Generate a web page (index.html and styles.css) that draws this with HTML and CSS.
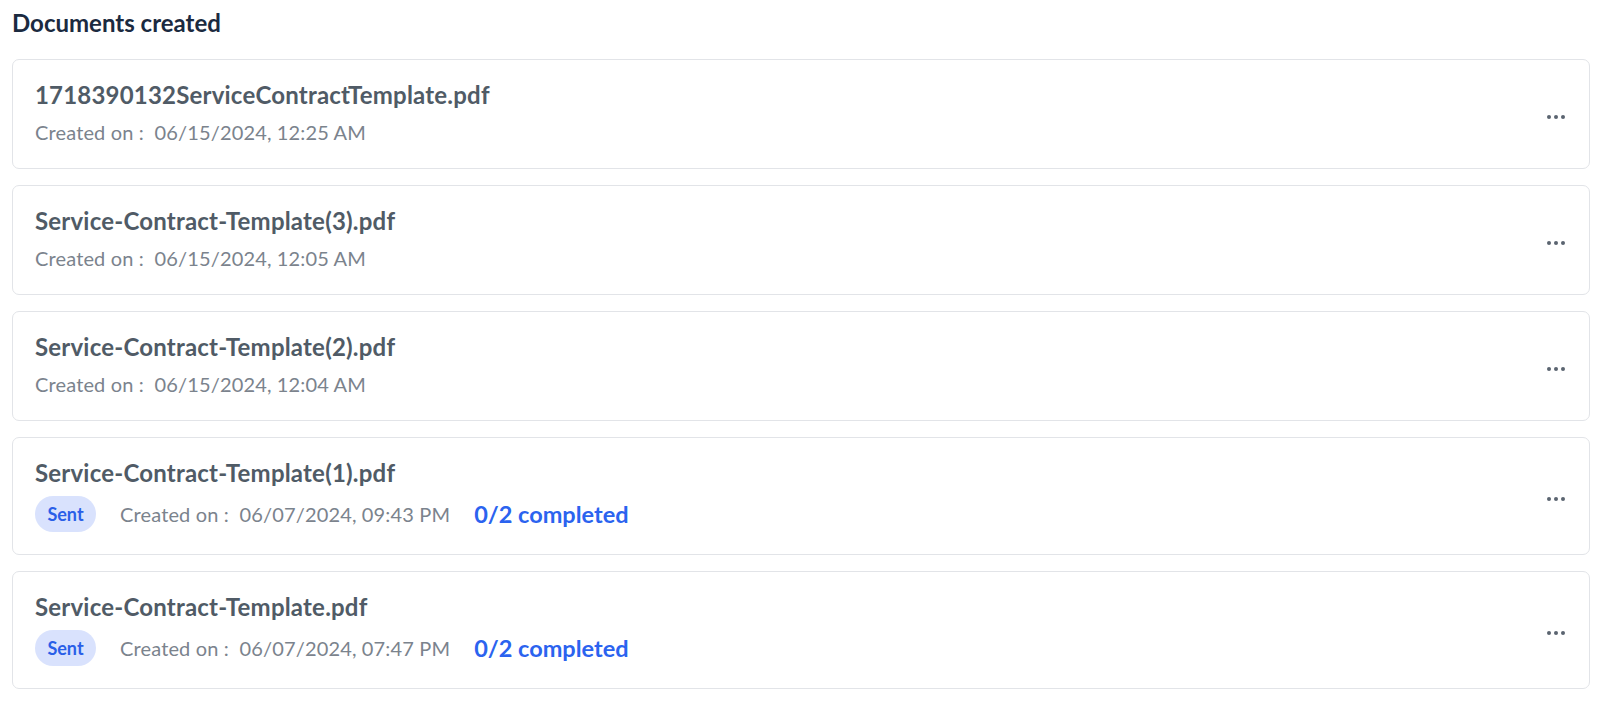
FILE: index.html
```html
<!DOCTYPE html>
<html>
<head>
<meta charset="utf-8">
<link rel="stylesheet" href="styles.css">
</head>
<body>
<div class="page">
  <h2 class="heading">Documents created</h2>
  <div class="list">
    <div class="card">
      <div class="info">
        <div class="title">1718390132ServiceContractTemplate.pdf</div>
        <div class="meta"><span class="created">Created on :&nbsp; 06/15/2024, 12:25 AM</span></div>
      </div>
      <svg class="more" width="20" height="6" viewBox="0 0 20 6"><circle cx="3" cy="3" r="2"/><circle cx="10" cy="3" r="2"/><circle cx="17" cy="3" r="2"/></svg>
    </div>
    <div class="card">
      <div class="info">
        <div class="title">Service-Contract-Template(3).pdf</div>
        <div class="meta"><span class="created">Created on :&nbsp; 06/15/2024, 12:05 AM</span></div>
      </div>
      <svg class="more" width="20" height="6" viewBox="0 0 20 6"><circle cx="3" cy="3" r="2"/><circle cx="10" cy="3" r="2"/><circle cx="17" cy="3" r="2"/></svg>
    </div>
    <div class="card">
      <div class="info">
        <div class="title">Service-Contract-Template(2).pdf</div>
        <div class="meta"><span class="created">Created on :&nbsp; 06/15/2024, 12:04 AM</span></div>
      </div>
      <svg class="more" width="20" height="6" viewBox="0 0 20 6"><circle cx="3" cy="3" r="2"/><circle cx="10" cy="3" r="2"/><circle cx="17" cy="3" r="2"/></svg>
    </div>
    <div class="card">
      <div class="info">
        <div class="title">Service-Contract-Template(1).pdf</div>
        <div class="meta">
          <span class="badge">Sent</span>
          <span class="created">Created on :&nbsp; 06/07/2024, 09:43 PM</span>
          <span class="progress">0/2 completed</span>
        </div>
      </div>
      <svg class="more" width="20" height="6" viewBox="0 0 20 6"><circle cx="3" cy="3" r="2"/><circle cx="10" cy="3" r="2"/><circle cx="17" cy="3" r="2"/></svg>
    </div>
    <div class="card">
      <div class="info">
        <div class="title">Service-Contract-Template.pdf</div>
        <div class="meta">
          <span class="badge">Sent</span>
          <span class="created">Created on :&nbsp; 06/07/2024, 07:47 PM</span>
          <span class="progress">0/2 completed</span>
        </div>
      </div>
      <svg class="more" width="20" height="6" viewBox="0 0 20 6"><circle cx="3" cy="3" r="2"/><circle cx="10" cy="3" r="2"/><circle cx="17" cy="3" r="2"/></svg>
    </div>
  </div>
</div>
</body>
</html>
```

FILE: styles.css
```css
* { box-sizing: border-box; }
html, body { margin: 0; padding: 0; background: #ffffff; }
body { font-family: Lato, "Noto Sans", sans-serif; }
.page { padding: 8px 18px 0 12px; }
.heading {
  margin: 0;
  font-size: 24px;
  line-height: 30px;
  font-weight: 700;
  color: #1b2a40;
}
.list {
  margin-top: 21px;
  display: flex;
  flex-direction: column;
  gap: 16px;
}
.card {
  display: flex;
  align-items: center;
  justify-content: space-between;
  border: 1px solid #e2e4e8;
  border-radius: 7px;
  padding: 21px 23px 22px 22px;
  background: #fff;
}
.info { display: flex; flex-direction: column; }
.title {
  font-size: 24px;
  line-height: 28px;
  font-weight: 700;
  letter-spacing: 0.2px;
  color: #505b66;
}
.meta {
  margin-top: 9px;
  display: flex;
  align-items: center;
  gap: 24px;
  min-height: 28px;
}
.created {
  font-size: 20px;
  line-height: 28px;
  letter-spacing: 0.15px;
  color: #7b838d;
}
.badge {
  display: inline-flex;
  align-items: center;
  justify-content: center;
  width: 61px;
  height: 36px;
  border-radius: 18px;
  background: #d9e2fd;
  color: #2a5fe8;
  font-size: 18px;
  font-weight: 700;
}
.progress {
  font-size: 23.5px;
  line-height: 28px;
  font-weight: 700;
  color: #2b63ef;
}
.more { fill: #5a6470; margin-top: 7px; flex: none; }
```
